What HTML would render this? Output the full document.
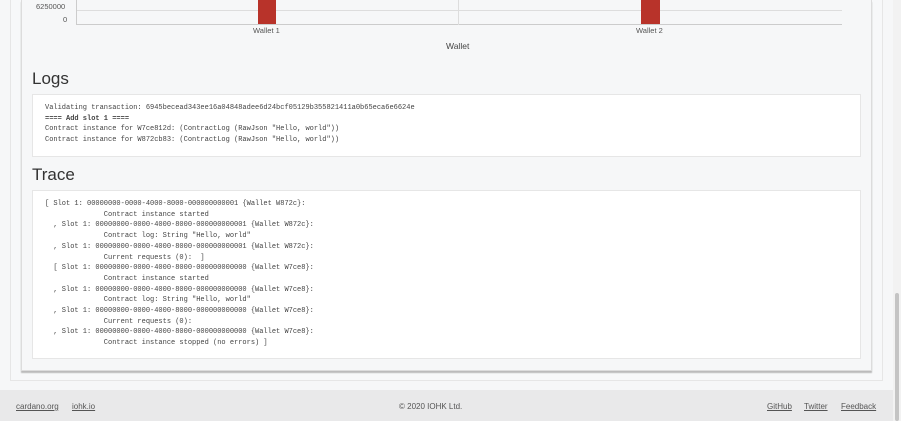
<!DOCTYPE html>
<html><head><meta charset="utf-8"><style>
*{margin:0;padding:0;box-sizing:border-box}
body{width:901px;height:421px;overflow:hidden;background:#f6f7f8;font-family:"Liberation Sans",sans-serif;position:relative;color:#333}
.abs{position:absolute}
.mono{font-family:"Liberation Mono",monospace;font-size:7px;color:#444;white-space:pre;line-height:10.7px}
.ax{font-size:7.5px;color:#555}
</style></head><body>
<div class="abs" style="left:10px;top:0;width:873px;height:381px;border:1px solid #e6e6e6;border-top:none;background:#f7f8f9"></div>
<div class="abs" style="left:21px;top:0;width:851px;height:371px;border:1px solid #dcdcdc;border-top:none;background:#f6f7f8;box-shadow:0 2px 1px #bbb"></div>
<div class="abs ax" style="left:36px;top:2px">6250000</div>
<div class="abs ax" style="left:63px;top:15px">0</div>
<div class="abs" style="left:76px;top:10px;width:766px;height:1px;background:#ddd"></div>
<div class="abs" style="left:76px;top:24px;width:766px;height:1px;background:#ccc"></div>
<div class="abs" style="left:76px;top:0;width:1px;height:25px;background:#ccc"></div>
<div class="abs" style="left:458px;top:0;width:1px;height:25px;background:#ddd"></div>
<div class="abs" style="left:258px;top:0;width:18px;height:24px;background:#b8332a"></div>
<div class="abs" style="left:641px;top:0;width:19px;height:24px;background:#b8332a"></div>
<div class="abs ax" style="left:253px;top:26px">Wallet 1</div>
<div class="abs ax" style="left:636px;top:26px">Wallet 2</div>
<div class="abs" style="left:446px;top:41px;font-size:8.5px;color:#444">Wallet</div>
<div class="abs" style="left:32px;top:69px;font-size:17px;color:#333">Logs</div>
<div class="abs" style="left:32px;top:94px;width:829px;height:63px;background:#fff;border:1px solid #e6e6e6"></div>
<div class="abs mono" style="left:45px;top:103px">Validating transaction: 6945becead343ee16a04848adee6d24bcf05129b355821411a0b65eca6e6624e
<b>==== Add slot 1 ====</b>
Contract instance for W7ce812d: (ContractLog (RawJson "Hello, world"))
Contract instance for W872cb83: (ContractLog (RawJson "Hello, world"))</div>
<div class="abs" style="left:32px;top:165px;font-size:17px;color:#333">Trace</div>
<div class="abs" style="left:32px;top:190px;width:829px;height:169px;background:#fff;border:1px solid #e6e6e6"></div>
<div class="abs mono" style="left:45px;top:199px">[ Slot 1: 00000000-0000-4000-8000-000000000001 {Wallet W872c}:
              Contract instance started
  , Slot 1: 00000000-0000-4000-8000-000000000001 {Wallet W872c}:
              Contract log: String "Hello, world"
  , Slot 1: 00000000-0000-4000-8000-000000000001 {Wallet W872c}:
              Current requests (0):  ]
  [ Slot 1: 00000000-0000-4000-8000-000000000000 {Wallet W7ce8}:
              Contract instance started
  , Slot 1: 00000000-0000-4000-8000-000000000000 {Wallet W7ce8}:
              Contract log: String "Hello, world"
  , Slot 1: 00000000-0000-4000-8000-000000000000 {Wallet W7ce8}:
              Current requests (0):
  , Slot 1: 00000000-0000-4000-8000-000000000000 {Wallet W7ce8}:
              Contract instance stopped (no errors) ]</div>
<div class="abs" style="left:0;top:390px;width:893px;height:31px;background:#e9e9ea"></div>
<div class="abs" style="left:16px;top:402px;font-size:8px;color:#555;text-decoration:underline">cardano.org</div>
<div class="abs" style="left:72px;top:402px;font-size:8px;color:#555;text-decoration:underline">iohk.io</div>
<div class="abs" style="left:399px;top:402px;font-size:8px;color:#555">© 2020 IOHK Ltd.</div>
<div class="abs" style="left:767px;top:402px;font-size:8px;color:#555;text-decoration:underline">GitHub</div>
<div class="abs" style="left:804px;top:402px;font-size:8px;color:#555;text-decoration:underline">Twitter</div>
<div class="abs" style="left:841px;top:402px;font-size:8px;color:#555;text-decoration:underline">Feedback</div>
<div class="abs" style="left:893px;top:0;width:8px;height:421px;background:#f2f2f2"></div>
<div class="abs" style="left:895px;top:293px;width:4px;height:128px;background:#c4c4c4;border-radius:2px"></div>
</body></html>
